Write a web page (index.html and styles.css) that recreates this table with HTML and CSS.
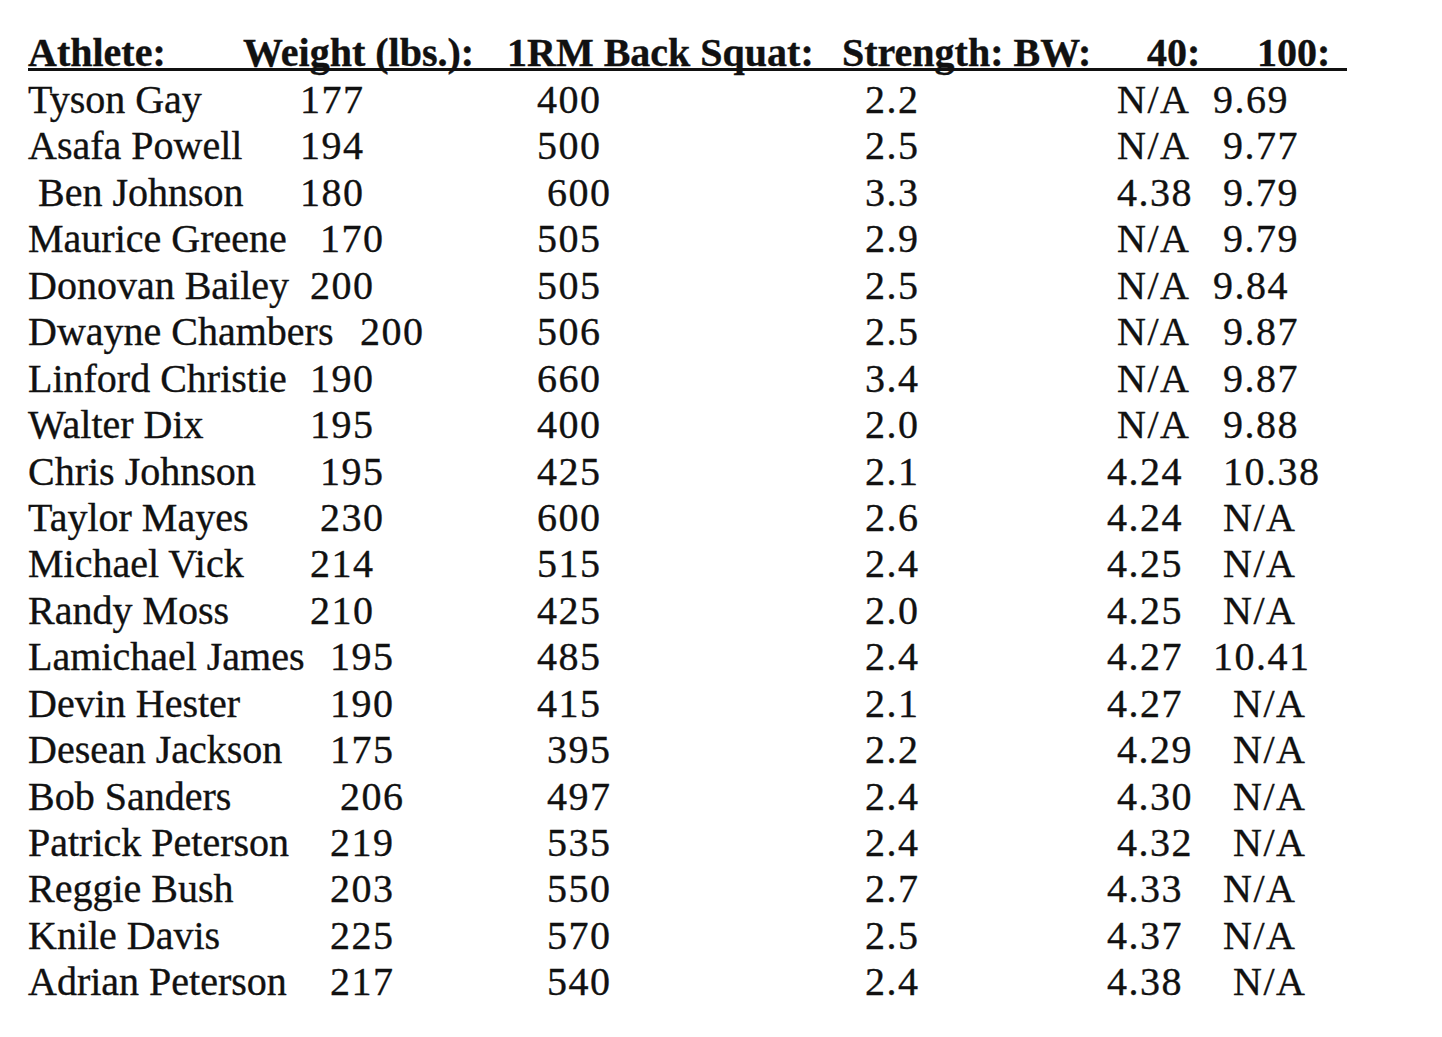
FILE: index.html
```html
<!DOCTYPE html>
<html lang="en">
<head>
<meta charset="utf-8">
<title>Athlete strength and speed</title>
<link rel="stylesheet" href="styles.css">
</head>
<body>
<main class="sheet">
  <div class="head">
    <div class="hc">Athlete:</div>
    <div class="hc">Weight (lbs.):</div>
    <div class="hc">1RM Back Squat:</div>
    <div class="hc">Strength: BW:</div>
    <div class="hc">40:</div>
    <div class="hc">100:</div>
  </div>
  <div class="rows">
    <div class="c">Tyson Gay</div><div class="c n">177</div><div class="c n">400</div><div class="c n">2.2</div><div class="c n"> N/A</div><div class="c n">9.69</div>
    <div class="c">Asafa Powell</div><div class="c n">194</div><div class="c n">500</div><div class="c n">2.5</div><div class="c n"> N/A</div><div class="c n"> 9.77</div>
    <div class="c"> Ben Johnson</div><div class="c n">180</div><div class="c n"> 600</div><div class="c n">3.3</div><div class="c n"> 4.38</div><div class="c n"> 9.79</div>
    <div class="c">Maurice Greene</div><div class="c n">  170</div><div class="c n">505</div><div class="c n">2.9</div><div class="c n"> N/A</div><div class="c n"> 9.79</div>
    <div class="c">Donovan Bailey</div><div class="c n"> 200</div><div class="c n">505</div><div class="c n">2.5</div><div class="c n"> N/A</div><div class="c n">9.84</div>
    <div class="c">Dwayne Chambers</div><div class="c n far">200</div><div class="c n">506</div><div class="c n">2.5</div><div class="c n"> N/A</div><div class="c n"> 9.87</div>
    <div class="c">Linford Christie</div><div class="c n"> 190</div><div class="c n">660</div><div class="c n">3.4</div><div class="c n"> N/A</div><div class="c n"> 9.87</div>
    <div class="c">Walter Dix</div><div class="c n"> 195</div><div class="c n">400</div><div class="c n">2.0</div><div class="c n"> N/A</div><div class="c n"> 9.88</div>
    <div class="c">Chris Johnson</div><div class="c n">  195</div><div class="c n">425</div><div class="c n">2.1</div><div class="c n">4.24</div><div class="c n"> 10.38</div>
    <div class="c">Taylor Mayes</div><div class="c n">  230</div><div class="c n">600</div><div class="c n">2.6</div><div class="c n">4.24</div><div class="c n"> N/A</div>
    <div class="c">Michael Vick</div><div class="c n"> 214</div><div class="c n">515</div><div class="c n">2.4</div><div class="c n">4.25</div><div class="c n"> N/A</div>
    <div class="c">Randy Moss</div><div class="c n"> 210</div><div class="c n">425</div><div class="c n">2.0</div><div class="c n">4.25</div><div class="c n"> N/A</div>
    <div class="c">Lamichael James</div><div class="c n">   195</div><div class="c n">485</div><div class="c n">2.4</div><div class="c n">4.27</div><div class="c n">10.41</div>
    <div class="c">Devin Hester</div><div class="c n">   190</div><div class="c n">415</div><div class="c n">2.1</div><div class="c n">4.27</div><div class="c n">  N/A</div>
    <div class="c">Desean Jackson</div><div class="c n">   175</div><div class="c n"> 395</div><div class="c n">2.2</div><div class="c n"> 4.29</div><div class="c n">  N/A</div>
    <div class="c">Bob Sanders</div><div class="c n">    206</div><div class="c n"> 497</div><div class="c n">2.4</div><div class="c n"> 4.30</div><div class="c n">  N/A</div>
    <div class="c">Patrick Peterson</div><div class="c n">   219</div><div class="c n"> 535</div><div class="c n">2.4</div><div class="c n"> 4.32</div><div class="c n">  N/A</div>
    <div class="c">Reggie Bush</div><div class="c n">   203</div><div class="c n"> 550</div><div class="c n">2.7</div><div class="c n">4.33</div><div class="c n"> N/A</div>
    <div class="c">Knile Davis</div><div class="c n">   225</div><div class="c n"> 570</div><div class="c n">2.5</div><div class="c n">4.37</div><div class="c n"> N/A</div>
    <div class="c">Adrian Peterson</div><div class="c n">   217</div><div class="c n"> 540</div><div class="c n">2.4</div><div class="c n">4.38</div><div class="c n">  N/A</div>
  </div>
</main>
</body>
</html>
```
FILE: styles.css
```css
html, body {
  margin: 0;
  padding: 0;
  background: #ffffff;
}

body {
  font-family: "Liberation Serif", "Times New Roman", serif;
  font-size: 40px;
  color: #111111;
  -webkit-text-stroke: 0.35px #111111;
}

.sheet {
  padding: 37px 0 0 28px;
}

.head {
  display: grid;
  grid-template-columns: 215px 264px 335px 305px 110px 90px;
  width: 1319px;
  line-height: 31px;
  font-weight: bold;
  border-bottom: 3px solid #111111;
  margin-bottom: 6px;
}

.hc {
  white-space: pre;
}

.rows {
  display: grid;
  grid-template-columns: 272px 237px 328px 242px 106px 160px;
  grid-auto-rows: 46.45px;
  line-height: 46.45px;
}

.c {
  white-space: pre;
}

.n {
  letter-spacing: 1.5px;
  word-spacing: -1.5px;
}

.far {
  padding-left: 60px;
}
```
